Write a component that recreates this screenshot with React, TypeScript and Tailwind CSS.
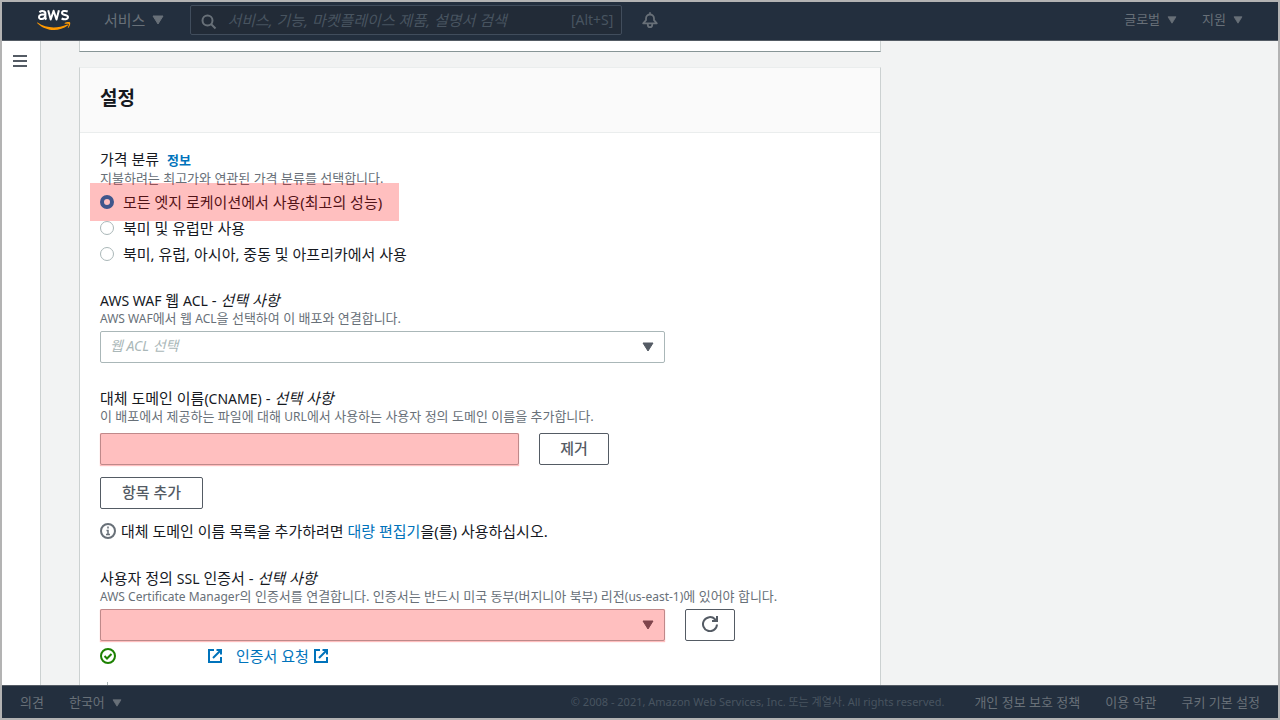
import type { ReactNode } from "react";

function Caret({ className }: { className: string }) {
  return (
    <svg viewBox="0 0 12 10" aria-hidden="true" className={className}>
      <path d="M1 1h10L6 9z" fill="currentColor" stroke="currentColor" strokeWidth="1" strokeLinejoin="round" />
    </svg>
  );
}

function AwsLogo() {
  return (
    <svg viewBox="0 0 34 22" className="h-[22px] w-[34px]" role="img" aria-label="AWS">
      <g fill="none" stroke="#fff" strokeWidth="2" strokeLinejoin="round">
        <path d="M2.4 3.1C4.6 1.6 8.4 1.600 8.4 4.400v3.900c0 1 .3 1.600.8 2.300M8.300 5.700C5 5.200 2 5.700 2 8.100c0 2.900 5.200 2.600 6.200-.7" />
        <path d="M11.200 1.200l2.500 9.300 2.900-8.700 2.900 8.700 2.400-9.300" />
        <path d="M30.700 2.500c-2.200-1-5.700-.8-5.700 1.400 0 2.700 6 1.600 6 4.200 0 2.500-3.800 2.800-6.400 1.400" />
      </g>
      <path d="M.6 13.600C9 19.400 20 20 30.200 15.500c.8-.3 1.400.5.600 1.100C21.500 23.300 8.600 22.300.3 14.200c-.4-.4-.1-.8.3-.6z" fill="#f90" />
      <path d="M27.600 14.200c1.800-1.400 5-1.300 5.500-.7.5.7-.1 4-1.900 5.500-.3.2-.6.1-.4-.2.4-1 1.300-3.200.9-3.800-.5-.6-2.800-.3-3.900-.2-.3 0-.4-.3-.2-.6z" fill="#f90" />
    </svg>
  );
}

function ExternalIcon() {
  return (
    <svg viewBox="0 0 16 16" aria-hidden="true" className="size-4" fill="none" stroke="#0073bb" strokeWidth="2">
      <path d="M7 2H2v12h12V9" />
      <path d="M9.500 2H14v4.500M14 2L6 10" />
    </svg>
  );
}

// Latin runs are set one step smaller than the Korean around them
function Latin({ children }: { children: ReactNode }) {
  return <span className="text-sm">{children}</span>;
}

function LatinHint({ children }: { children: ReactNode }) {
  return <span className="text-xs">{children}</span>;
}

function Optional() {
  return <> - <i>선택 사항</i></>;
}

function Hint({ children }: { children: ReactNode }) {
  return <p className="text-[13px] leading-[17px] text-[#687078]">{children}</p>;
}

function Mark() {
  return <span className="pointer-events-none absolute inset-0 bg-[#ff0000]/25 shadow-[0_1px_1px_#ffbfbf]" />;
}

const prices = [
  { id: "all", text: "모든 엣지 로케이션에서 사용(최고의 성능)" },
  { id: "na-eu", text: "북미 및 유럽만 사용" },
  { id: "na-eu-asia", text: "북미, 유럽, 아시아, 중동 및 아프리카에서 사용" },
];

const button = "h-8 rounded-[2px] border border-[#545b64] bg-white pb-[2px] font-medium text-[#545b64]";
const field = "block h-8 w-full appearance-none rounded-[2px] border border-[#aab7b8] bg-white px-[9px]";

function Header() {
  return (
    <header className="flex h-[39px] shrink-0 items-center border-b border-[#545b64] bg-[#232f3e] px-[35px] pb-[2px] text-[#687078]">
      <a href="#home" className="shrink-0"><AwsLogo /></a>
      <button className="ml-[33px] flex shrink-0 items-center gap-[7px]">
        서비스
        <Caret className="h-[10px] w-3" />
      </button>
      <div className="relative ml-[26px] w-[432px]">
        <svg viewBox="0 0 16 16" aria-hidden="true" className="absolute top-[9px] left-[11px] size-4" fill="none" stroke="currentColor" strokeWidth="2">
          <circle cx="6.500" cy="6.500" r="5" />
          <path d="M10 10l4.500 4.500" />
        </svg>
        <input
          type="search"
          aria-label="검색"
          placeholder="서비스, 기능, 마켓플레이스 제품, 설명서 검색"
          className="block h-[30px] w-full rounded-[2px] border border-[#414d5c] bg-[#222b37] pr-16 pb-px pl-9 placeholder:text-[#485460] placeholder:italic"
        />
        <kbd className="absolute top-[5px] right-[9px] font-[inherit] text-sm text-[#485460]">[Alt+S]</kbd>
      </div>
      <button aria-label="알림" className="ml-5 shrink-0">
        <svg viewBox="0 0 16 16" className="size-4" fill="none" stroke="currentColor" strokeWidth="1.800" strokeLinejoin="round">
          <path d="M8 .300v2M1.200 11.300h13.600L12 8.200V6.500a4 4 0 0 0-8 0v1.700z" />
          <path d="M5.800 11.500v1.400a2.200 2.200 0 0 0 4.400 0v-1.400" />
        </svg>
      </button>
      <nav className="ml-auto flex shrink-0 gap-[25px] text-[13px]">
        <button className="flex items-center gap-[7px]">
          글로벌
          <Caret className="h-2 w-[10px]" />
        </button>
        <button className="flex items-center gap-[7px]">
          지원
          <Caret className="h-2 w-[10px]" />
        </button>
      </nav>
    </header>
  );
}

function Settings() {
  return (
    <section className="border border-[#ccd1d1] border-t-[#eaeded] bg-white">
      <div className="flex h-[65px] items-center border-b border-[#eaeded] bg-[#fafafa] px-5 pb-1">
        <h2 className="text-[19px] font-bold">설정</h2>
      </div>

      <div className="flex flex-col gap-[25px] px-5 pt-4 leading-5">
        <fieldset>
          <legend>
            가격 분류
            <a href="#info" className="ml-2 text-[13px] font-bold text-[#0073bb]">정보</a>
          </legend>
          <Hint>지불하려는 최고가와 연관된 가격 분류를 선택합니다.</Hint>
          <div className="mt-1 flex flex-col gap-1">
            {prices.map((p, i) => (
              <label key={p.id} className="relative flex h-[22px] w-fit items-center gap-[9px]">
                <input
                  type="radio"
                  name="price"
                  defaultChecked={i === 0}
                  className="size-[14px] appearance-none rounded-full border border-[#aab7b8] bg-white checked:border-[4px] checked:border-[#0073bb]"
                />
                {p.text}
                {i === 0 && (
                  <span className="pointer-events-none absolute -top-2 -left-[10px] h-[38px] w-[309px] bg-[#ff0000]/25" />
                )}
              </label>
            ))}
          </div>
        </fieldset>

        <div>
          <label htmlFor="acl" className="block h-5"><Latin>AWS WAF</Latin> 웹 <Latin>ACL</Latin><Optional /></label>
          <Hint><LatinHint>AWS WAF</LatinHint>에서 웹 <LatinHint>ACL</LatinHint>을 선택하여 이 배포와 연결합니다.</Hint>
          <div className="relative mt-1 max-w-[565px]">
            <select id="acl" className={`${field} pb-[2px] text-sm text-[#aab7b8] italic`}>
              <option>웹 ACL 선택</option>
            </select>
            <Caret className="pointer-events-none absolute top-[11px] right-[11px] h-[10px] w-3 text-[#545b64]" />
          </div>
        </div>

        <div>
          <label htmlFor="cname" className="block h-5">대체 도메인 이름<Latin>(CNAME)</Latin><Optional /></label>
          <Hint>이 배포에서 제공하는 파일에 대해 <LatinHint>URL</LatinHint>에서 사용하는 사용자 정의 도메인 이름을 추가합니다.</Hint>
          <div className="mt-2 flex gap-5">
            <div className="relative w-full max-w-[419px]">
              <input id="cname" type="text" className={field} />
              <Mark />
            </div>
            <button className={`${button} w-[70px] shrink-0`}>제거</button>
          </div>
          <button className={`${button} mt-3 w-[103px]`}>항목 추가</button>
          <p className="mt-[10px] flex h-6 items-center gap-[5px]">
            <svg viewBox="0 0 16 16" aria-hidden="true" className="size-4" fill="none" stroke="#687078" strokeWidth="2">
              <circle cx="8" cy="8" r="7" />
              <path d="M8 3.500v2M6.500 7.500H8v4M6 11.500h4" strokeWidth="1.500" />
            </svg>
            <span>
              대체 도메인 이름 목록을 추가하려면 <a href="#bulk" className="text-[#0073bb]">대량 편집기</a>을(를) 사용하십시오.
            </span>
          </p>
        </div>

        <div>
          <label htmlFor="cert" className="block h-5">사용자 정의 <Latin>SSL</Latin> 인증서<Optional /></label>
          <Hint>
            <LatinHint>AWS Certificate Manager</LatinHint>의 인증서를 연결합니다. 인증서는 반드시 미국 동부(버지니아 북부) 리전<LatinHint>(us-east-1)</LatinHint>에 있어야 합니다.
          </Hint>
          <div className="mt-1 flex gap-5">
            <div className="relative w-full max-w-[565px]">
              <select id="cert" className={field} />
              <Caret className="pointer-events-none absolute top-[11px] right-[11px] h-[10px] w-3 text-[#545b64]" />
              <Mark />
            </div>
            <button aria-label="새로 고침" className={`${button} flex w-[50px] shrink-0 items-center justify-center`}>
              <svg viewBox="0 0 16 16" className="size-4" fill="none" stroke="currentColor" strokeWidth="2">
                <path d="M15 8.500A7 7 0 1 1 13 3.200L15 5" />
                <path d="M15 0v5h-5" />
              </svg>
            </button>
          </div>
          <div className="mt-1 flex h-[22px] items-center">
            <svg viewBox="0 0 16 16" aria-hidden="true" className="size-4" fill="none" stroke="#1d8102" strokeWidth="2">
              <circle cx="8" cy="8" r="7" />
              <path d="M4.500 8l2.500 2.500L11.500 6" />
            </svg>
            <a href="#certificate" aria-label="인증서 보기" className="ml-[91px]"><ExternalIcon /></a>
            <a href="#request" className="ml-[13px] flex items-center gap-1 text-[#0073bb]">
              인증서 요청
              <ExternalIcon />
            </a>
          </div>
          <div className="mt-[15px] ml-[7px] h-20 border-l border-[#aab7b8]" />
        </div>
      </div>
    </section>
  );
}

function Footer() {
  return (
    <footer className="flex h-[33px] shrink-0 items-center border-t border-[#545b64] bg-[#232f3e] px-[18px] pt-px text-[13px] text-[#687078]">
      <button>의견</button>
      <button className="ml-[25px] flex items-center gap-[7px]">
        한국어
        <Caret className="h-2 w-[10px]" />
      </button>
      <p className="ml-auto text-[11px] text-[#485460]">© 2008 - 2021, Amazon Web Services, Inc. 또는 계열사. All rights reserved.</p>
      <nav className="ml-[30px] flex gap-[25px]">
        <a href="#privacy">개인 정보 보호 정책</a>
        <a href="#terms">이용 약관</a>
        <a href="#cookies">쿠키 기본 설정</a>
      </nav>
    </footer>
  );
}

export default function App() {
  return (
    <div className="flex h-screen flex-col border-2 border-[#b3b3b3] bg-[#f2f3f3] font-['Noto_Sans','Noto_Sans_CJK_KR',sans-serif] text-[15px] whitespace-nowrap text-[#16191f]">
      <Header />
      <div className="flex min-h-0 flex-1">
        <aside className="w-[39px] shrink-0 border-r border-[#ccd1d1] bg-white">
          <button aria-label="메뉴 열기" className="flex w-full flex-col items-center gap-[3px] pt-[14px] pr-[2px]">
            <span className="h-[2px] w-[14px] bg-[#545b64]" />
            <span className="h-[2px] w-[14px] bg-[#545b64]" />
            <span className="h-[2px] w-[14px] bg-[#545b64]" />
          </button>
        </aside>
        <main className="min-w-0 flex-1 overflow-hidden pr-5 pl-[38px]">
          <div className="flex max-w-[802px] flex-col gap-[15px]">
            <div className="h-[11px] border-x border-b border-x-[#ccd1d1] border-b-[#879596] bg-white" />
            <Settings />
          </div>
        </main>
      </div>
      <Footer />
    </div>
  );
}
